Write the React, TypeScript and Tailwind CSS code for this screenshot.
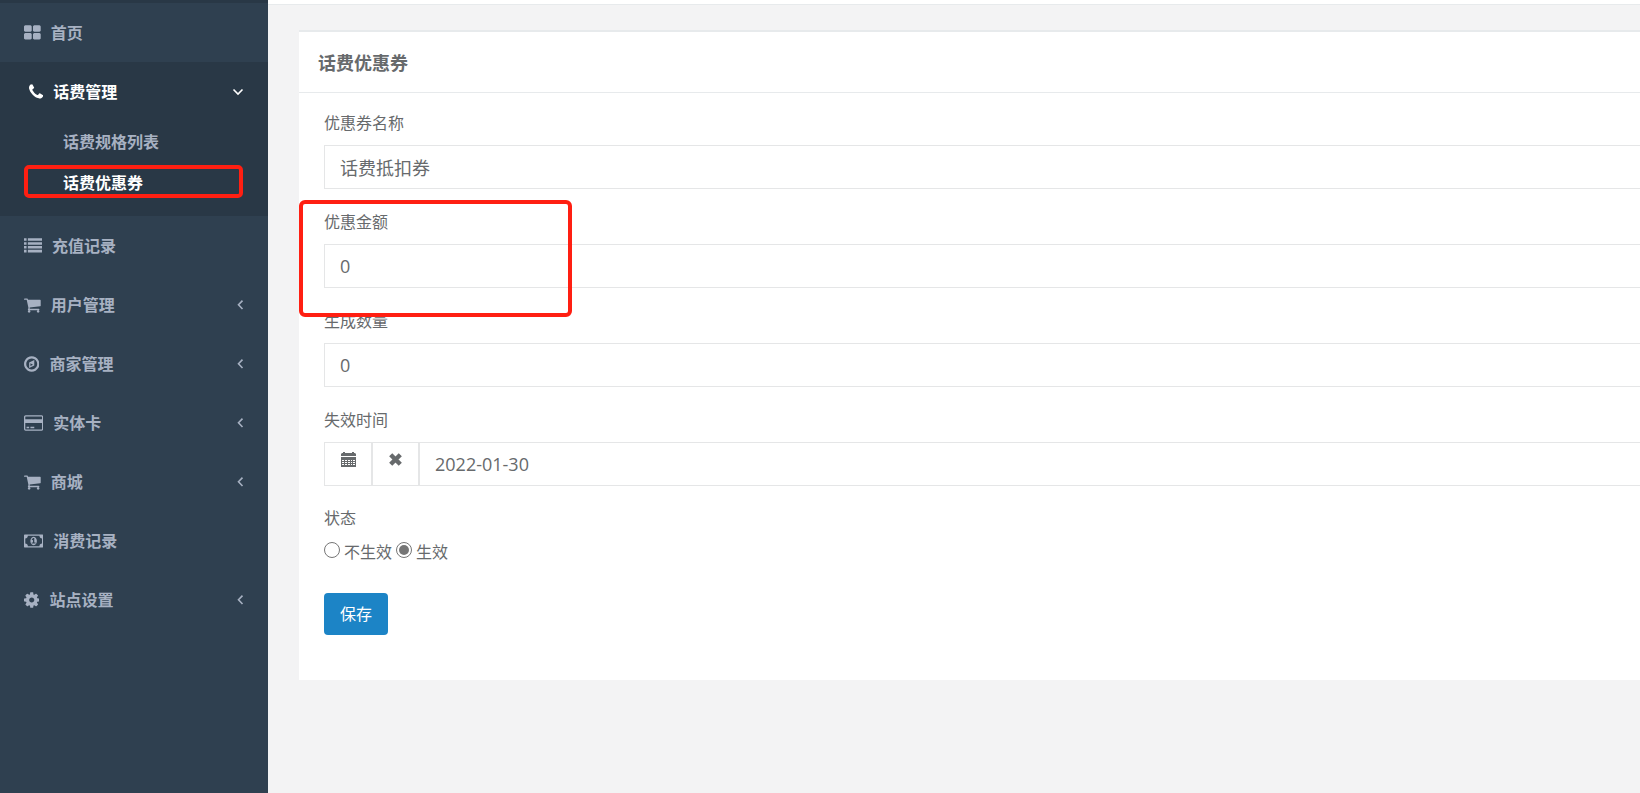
import { clsx } from "clsx";

type IconName = "home" | "phone" | "list" | "cart" | "compass" | "card" | "money" | "cog";

// Glyph outlines use font coordinates (y points up), so they are flipped when drawn
const glyphs: Record<IconName, { width: number; path: string }> = {
    home: {
        width: 1664,
        path: "M768 512v-384q0 -52 -38 -90t-90 -38h-512q-52 0 -90 38t-38 90v384q0 52 38 90t90 38h512q52 0 90 -38t38 -90zM768 1280v-384q0 -52 -38 -90t-90 -38h-512q-52 0 -90 38t-38 90v384q0 52 38 90t90 38h512q52 0 90 -38t38 -90zM1664 512v-384q0 -52 -38 -90t-90 -38h-512q-52 0 -90 38t-38 90v384q0 52 38 90t90 38h512q52 0 90 -38t38 -90zM1664 1280v-384q0 -52 -38 -90t-90 -38h-512q-52 0 -90 38t-38 90v384q0 52 38 90t90 38h512q52 0 90 -38t38 -90z",
    },
    phone: {
        width: 1408,
        path: "M1408 296q0 -27 -10 -70.5t-21 -68.5q-21 -50 -122 -106q-94 -51 -186 -51q-27 0 -53 3.5t-57.5 12.5t-47 14.5t-55.5 20.5t-49 18q-98 35 -175 83q-127 79 -264 216t-216 264q-48 77 -83 175q-3 9 -18 49t-20.5 55.5t-14.5 47t-12.5 57.5t-3.5 53q0 92 51 186 q56 101 106 122q25 11 68.5 21t70.5 10q14 0 21 -3q18 -6 53 -76q11 -19 30 -54t35 -63.5t31 -53.5q3 -4 17.5 -25t21.5 -35.5t7 -28.5q0 -20 -28.5 -50t-62 -55t-62 -53t-28.5 -46q0 -9 5 -22.5t8.5 -20.5t14 -24t11.5 -19q76 -137 174 -235t235 -174q2 -1 19 -11.5t24 -14 t20.5 -8.5t22.5 -5q18 0 46 28.5t53 62t55 62t50 28.5q14 0 28.5 -7t35.5 -21.5t25 -17.5q25 -15 53.5 -31t63.5 -35t54 -30q70 -35 76 -53q3 -7 3 -21z",
    },
    list: {
        width: 1792,
        path: "M0 0h256v256h-256zM0 384h256v256h-256zM0 768h256v256h-256zM0 1152h256v256h-256zM384 0h1408v256h-1408zM384 384h1408v256h-1408zM384 768h1408v256h-1408zM384 1152h1408v256h-1408z",
    },
    cart: {
        width: 1664,
        path: "M640 0q0 -52 -38 -90t-90 -38t-90 38t-38 90t38 90t90 38t90 -38t38 -90zM1536 0q0 -52 -38 -90t-90 -38t-90 38t-38 90t38 90t90 38t90 -38t38 -90zM1664 1088v-512q0 -24 -16.5 -42.5t-40.5 -21.5l-1044 -122q13 -60 13 -70q0 -16 -24 -64h920q26 0 45 -19t19 -45 t-19 -45t-45 -19h-1024q-26 0 -45 19t-19 45q0 11 8 31.5t16 36t21.5 40t15.5 29.5l-177 823h-204q-26 0 -45 19t-19 45t19 45t45 19h256q16 0 28.5 -6.5t19.5 -15.5t13 -24.5t8 -26t5.5 -29.5t4.5 -26h1201q26 0 45 -19t19 -45z",
    },
    compass: {
        width: 1536,
        path: "M640 448l256 128l-256 128v-256zM1024 1039v-542l-512 -256v542zM1312 640q0 148 -73 273t-198 198t-273 73t-273 -73t-198 -198t-73 -273t73 -273t198 -198t273 -73t273 73t198 198t73 273zM1536 640q0 -209 -103 -385.5t-279.5 -279.5t-385.5 -103 t-385.5 103t-279.5 279.5t-103 385.5t103 385.5t279.5 279.5t385.5 103t385.5 -103t279.5 -279.5t103 -385.5z",
    },
    card: {
        width: 1920,
        path: "M1760 1408q66 0 113 -47t47 -113v-1216q0 -66 -47 -113t-113 -47h-1600q-66 0 -113 47t-47 113v1216q0 66 47 113t113 47h1600zM160 1280q-13 0 -22.5 -9.5t-9.5 -22.5v-224h1664v224q0 13 -9.5 22.5t-22.5 9.5h-1600zM1760 0q13 0 22.5 9.5t9.5 22.5v608h-1664v-608 q0 -13 9.5 -22.5t22.5 -9.5h1600zM256 128v128h256v-128h-256zM640 128v128h384v-128h-384z",
    },
    money: {
        width: 1920,
        path: "M768 384h384v96h-128v448h-114l-148 -137l77 -80q42 37 55 57h2v-288h-128v-96zM1280 640q0 -70 -21 -142t-59.5 -134t-101.5 -101t-138 -39t-138 39t-101.5 101t-59.5 134t-21 142t21 142t59.5 134t101.5 101t138 39t138 -39t101.5 -101t59.5 -134t21 -142zM1792 384 v512q-106 0 -181 75t-75 181h-1152q0 -106 -75 -181t-181 -75v-512q106 0 181 -75t75 -181h1152q0 106 75 181t181 75zM1920 1216v-1152q0 -26 -19 -45t-45 -19h-1792q-26 0 -45 19t-19 45v1152q0 26 19 45t45 19h1792q26 0 45 -19t19 -45z",
    },
    cog: {
        width: 1536,
        path: "M1024 640q0 106 -75 181t-181 75t-181 -75t-75 -181t75 -181t181 -75t181 75t75 181zM1536 749v-222q0 -12 -8 -23t-20 -13l-185 -28q-19 -54 -39 -91q35 -50 107 -138q10 -12 10 -25t-9 -23q-27 -37 -99 -108t-94 -71q-12 0 -26 9l-138 108q-44 -23 -91 -38 q-16 -136 -29 -186q-7 -28 -36 -28h-222q-14 0 -24.5 8.5t-11.5 21.5l-28 184q-49 16 -90 37l-141 -107q-10 -9 -25 -9q-14 0 -25 11q-126 114 -165 168q-7 10 -7 23q0 12 8 23q15 21 51 66.5t54 70.5q-27 50 -41 99l-183 27q-13 2 -21 12.5t-8 23.5v222q0 12 8 23t19 13 l186 28q14 46 39 92q-40 57 -107 138q-10 12 -10 24q0 10 9 23q26 36 98.5 107.5t94.5 71.5q13 0 26 -10l138 -107q44 23 91 38q16 136 29 186q7 28 36 28h222q14 0 24.5 -8.5t11.5 -21.5l28 -184q49 -16 90 -37l142 107q9 9 24 9q13 0 25 -10q129 -119 165 -170q7 -8 7 -22 q0 -12 -8 -23q-15 -21 -51 -66.5t-54 -70.5q26 -50 41 -98l183 -28q13 -2 21 -12.5t8 -23.5z",
    },
};

type MenuItem = {
    label: string;
    icon: IconName;
    hasChildren?: boolean;
};

const menuItems: MenuItem[] = [
    { label: "充值记录", icon: "list" },
    { label: "用户管理", icon: "cart", hasChildren: true },
    { label: "商家管理", icon: "compass", hasChildren: true },
    { label: "实体卡", icon: "card", hasChildren: true },
    { label: "商城", icon: "cart", hasChildren: true },
    { label: "消费记录", icon: "money" },
    { label: "站点设置", icon: "cog", hasChildren: true },
];

function MenuIcon({ name }: { name: IconName }) {
    const { width, path } = glyphs[name];

    return (
        <svg viewBox={`0 0 ${width} 1792`} className="h-[18px] w-auto shrink-0" fill="currentColor" aria-hidden="true">
            <path d={path} transform="translate(0 1536) scale(1 -1)" />
        </svg>
    );
}

function Arrow({ open = false }: { open?: boolean }) {
    return (
        <svg
            viewBox="0 0 12 12"
            className="ml-auto size-3 shrink-0"
            fill="none"
            stroke="currentColor"
            strokeWidth="1.6"
            aria-hidden="true"
        >
            <path d={open ? "M1.5 3.5 6 8l4.5-4.5" : "M10.5 1.600 6.500 5.800l4 4.200"} />
        </svg>
    );
}

function MenuLink({ label, icon, hasChildren, open }: MenuItem & { open?: boolean }) {
    return (
        <a href="#" className={clsx("flex h-[59px] items-center gap-[10px] pr-6", open ? "pl-[29px]" : "pl-6")}>
            <MenuIcon name={icon} />
            {label}
            {hasChildren && <Arrow open={open} />}
        </a>
    );
}

function Sidebar() {
    return (
        <nav className="w-[268px] shrink-0 border-t-[3px] border-[#293846] bg-[#2f4050] font-semibold text-[#a7b1c2]">
            <ul>
                <li>
                    <MenuLink label="首页" icon="home" />
                </li>
                <li className="bg-[#293846] pb-[13px]">
                    <div className="text-white">
                        <MenuLink label="话费管理" icon="phone" hasChildren open />
                    </div>
                    <ul>
                        <li>
                            <a href="#" className="flex h-[41px] items-center pl-[63px]">
                                话费规格列表
                            </a>
                        </li>
                        <li className="relative">
                            <a href="#" className="flex h-[41px] items-center pl-[63px] text-white">
                                话费优惠券
                            </a>
                            <div className="pointer-events-none absolute top-[3px] right-[25px] left-6 h-[33px] rounded-[5px] border-4 border-[#ff1f12]" />
                        </li>
                    </ul>
                </li>
                {menuItems.map((item) => (
                    <li key={item.label}>
                        <MenuLink {...item} />
                    </li>
                ))}
            </ul>
        </nav>
    );
}

const labelClass = "mb-[10px] block leading-6";
const inputClass = "h-11 w-full border border-r-0 border-[#e5e6e7] bg-white px-[15px] text-lg outline-none";

function TextField({ id, label, value }: { id: string; label: string; value: string }) {
    return (
        <div className="mb-[21px]">
            <label htmlFor={id} className={labelClass}>
                {label}
            </label>
            <input id={id} type="text" defaultValue={value} className={inputClass} />
        </div>
    );
}

function DateField() {
    const buttonClass = "flex h-11 shrink-0 justify-center border border-[#e5e6e7] bg-white pt-[9px]";

    return (
        <div className="mb-5">
            <label htmlFor="expire" className={labelClass}>
                失效时间
            </label>
            <div className="flex">
                <button type="button" aria-label="选择日期" className={clsx(buttonClass, "w-12")}>
                    <svg viewBox="0 0 15 15" className="size-[15px]" fill="currentColor" aria-hidden="true">
                        <path d="M0 4V2l1-1h1V0h2v1h7V0h2v1h1l1 1v2z" />
                        <path
                            fillRule="evenodd"
                            d="M0 5h15v10H0zM1 8v1h2V8zM4 8v1h2V8zM7 8v1h2V8zM10 8v1h1V8zM12 8v1h2V8zM1 10v1h2v-1zM4 10v1h2v-1zM7 10v1h2v-1zM10 10v1h1v-1zM12 10v1h2v-1zM1 12v1h2v-1zM4 12v1h2v-1zM7 12v1h2v-1zM10 12v1h1v-1zM12 12v1h2v-1z"
                        />
                    </svg>
                </button>
                <button type="button" aria-label="清除日期" className={clsx(buttonClass, "w-[47px]")}>
                    <svg
                        viewBox="0 0 15 15"
                        className="size-[15px]"
                        fill="none"
                        stroke="currentColor"
                        strokeWidth="4.4"
                        aria-hidden="true"
                    >
                        <path d="M2.700 2.700l9.600 9.600M12.300 2.700l-9.600 9.600" />
                    </svg>
                </button>
                <input id="expire" type="text" defaultValue="2022-01-30" className={inputClass} />
            </div>
        </div>
    );
}

function RadioOption({ label, value, checked = false }: { label: string; value: string; checked?: boolean }) {
    return (
        <label className="flex items-center gap-1">
            <input
                type="radio"
                name="status"
                value={value}
                defaultChecked={checked}
                className="mb-1 size-4 appearance-none rounded-full border border-[#767676] bg-white bg-clip-content p-[2px] checked:bg-[#767676]"
            />
            {label}
        </label>
    );
}

export default function App() {
    return (
        <div className="flex min-h-screen bg-[#f3f3f4] font-['Open_Sans','Noto_Sans_CJK_SC',sans-serif] text-base text-[#676a6c]">
            <Sidebar />
            <main className="min-w-0 flex-1">
                <div className="h-[5px] border-b border-[#e7eaec] bg-white" />
                <section className="relative mt-[25px] ml-[31px] border-t-2 border-[#e7eaec] bg-white">
                    <h5 className="flex h-[61px] items-center border-b border-[#e7eaec] px-[19px] pt-[2px] text-lg font-semibold">
                        话费优惠券
                    </h5>
                    <form className="pt-[18px] pb-[45px] pl-[25px]">
                        <TextField id="name" label="优惠券名称" value="话费抵扣券" />
                        <TextField id="amount" label="优惠金额" value="0" />
                        <TextField id="count" label="生成数量" value="0" />
                        <DateField />
                        <fieldset className="mb-[29px]">
                            <legend className={labelClass}>状态</legend>
                            <div className="flex gap-1 leading-6">
                                <RadioOption label="不生效" value="0" />
                                <RadioOption label="生效" value="1" checked />
                            </div>
                        </fieldset>
                        <button type="button" className="h-[42px] rounded-[4px] bg-[#1c84c6] px-4 text-white">
                            保存
                        </button>
                    </form>
                    <div className="pointer-events-none absolute top-[168px] left-0 h-[117px] w-[273px] rounded-[6px] border-4 border-[#ff1f12]" />
                </section>
            </main>
        </div>
    );
}
